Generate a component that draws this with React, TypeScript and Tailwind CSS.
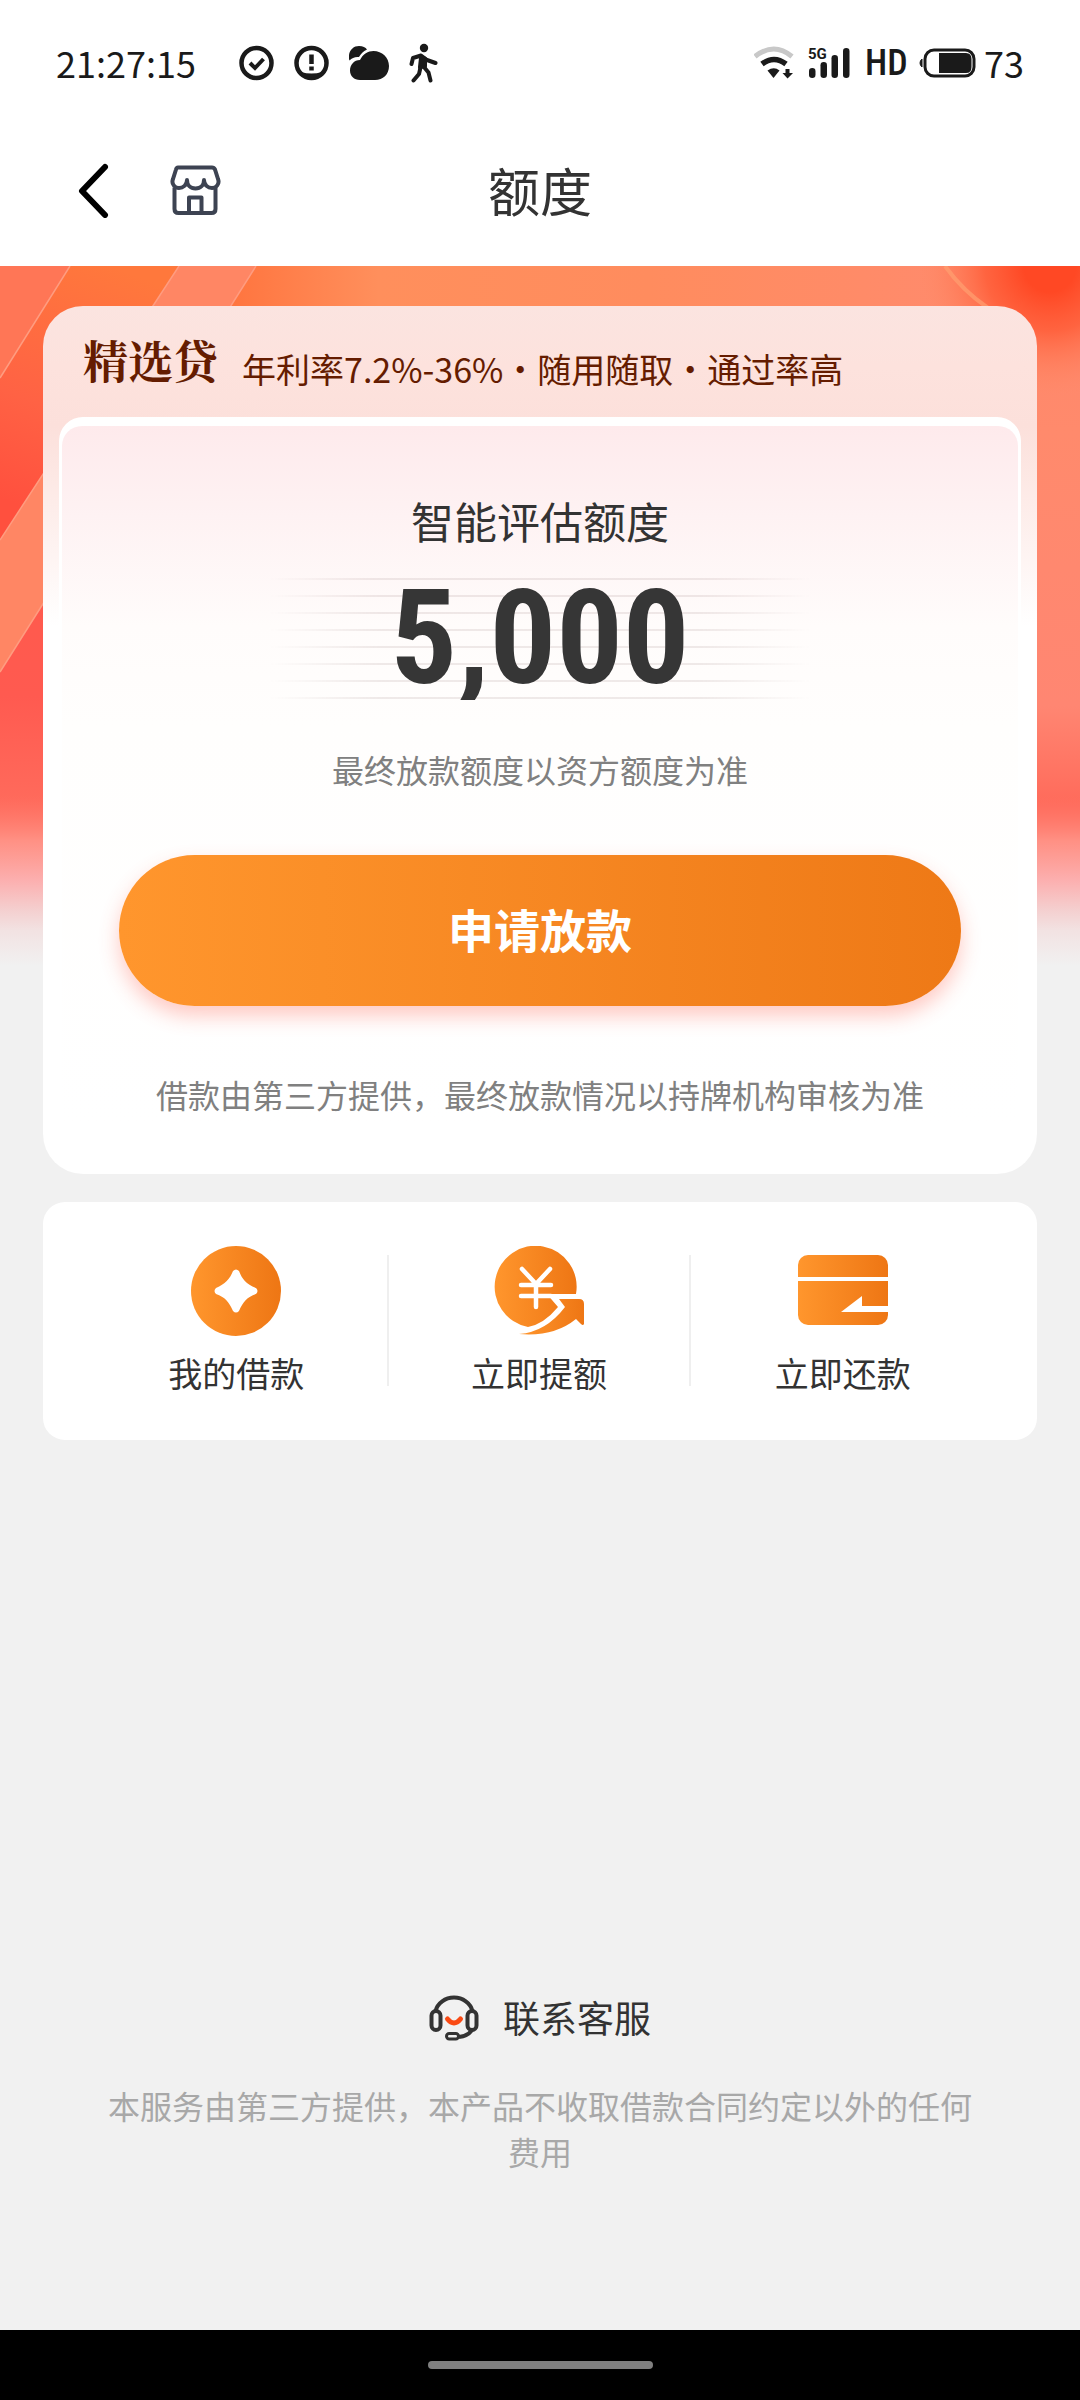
import type { ReactNode } from 'react';

function StatusBar() {
  return (
    <div className="flex h-[118px] items-center justify-between px-[56px] pt-2 text-[36px] leading-none text-[#1a1a1a]">
      <div className="flex items-center">
        <span className="w-[183px] pb-[3px]">21:27:15</span>
        <div className="flex items-center gap-5">
          <svg width="35" height="36" viewBox="0 0 35 36" fill="none" stroke="#1a1a1a">
            <circle cx="17.5" cy="18" r="15" strokeWidth="4.5" />
            <path d="M11 18l5 5 8.500-9" strokeWidth="4" />
          </svg>
          <svg width="35" height="36" viewBox="0 0 35 36" fill="none" stroke="#1a1a1a">
            <circle cx="17.5" cy="18" r="15" strokeWidth="4.5" />
            <path d="M17.500 9.500v9.500M17.500 21.500v4" strokeWidth="4.5" />
            <path d="M7 27q10.500 3 21 0q-4 6-10.500 6T7 27z" fill="#1a1a1a" stroke="none" />
          </svg>
          <svg width="40" height="36" viewBox="0 0 40 36" fill="#1a1a1a">
            <path d="M0 14C-1 6 4 1 10 1c4 0 6.500 1.500 8 3.500C14 6 12 9 10 12c-4-.5-7 1-9.500 3.500z" />
            <path d="M11 35C5 35 1 31 1 25.500S5 15 11 15C14 9 19 6 24.500 6 33 6 40 12.500 40 21s-6 14-14 14z" />
          </svg>
          <svg width="29" height="40" viewBox="0 0 29 40" fill="none" stroke="#1a1a1a" strokeWidth="4" strokeLinecap="round" strokeLinejoin="round">
            <circle cx="15" cy="5" r="4.2" fill="#1a1a1a" stroke="none" />
            <path d="M2.500 21l1.500-6L12 12.500l6 4.500 8.500 3" />
            <path d="M12.500 15L11.500 24M15.500 16v7" strokeWidth="5" />
            <path d="M11.500 24.500L10 31l-5.500 6.500M14.500 23.500l5 6 2 8" />
          </svg>
        </div>
      </div>
      <div className="flex items-center">
        <svg width="97" height="48" viewBox="0 -8 97 48" fill="#1a1a1a">
          <path d="M1 9.500Q20-5.500 38 9.500" fill="none" stroke="#c8c8c8" strokeWidth="5" />
          <path d="M8 17Q20 8 32 17" fill="none" stroke="#1a1a1a" strokeWidth="5.5" />
          <path d="M13.500 23.500q6.500-4.500 12 0L19.500 31z" />
          <path d="M31.500 22h4v4h3.500L33.500 31.500 28.500 26h3z" />
          <text x="54" y="11.5" fontSize="15" fontWeight="700" fontFamily="Roboto, sans-serif">5G</text>
          <rect x="55" y="21" width="6.5" height="10" rx="3.2" />
          <rect x="66.5" y="15" width="6.5" height="16" rx="3.2" />
          <rect x="77.5" y="8" width="6.5" height="23" rx="3.2" />
          <rect x="89" y="1" width="6.5" height="30" rx="3.2" />
        </svg>
        <span className="ml-[14px] w-[54px] font-['Roboto_Condensed','Roboto',sans-serif] text-[36px] font-medium">HD</span>
        <svg width="57" height="30" viewBox="0 0 57 30" fill="none">
          <path d="M3 11a5 5 0 000 8z" fill="#1a1a1a" stroke="#1a1a1a" />
          <rect x="6" y="2" width="49" height="26" rx="9" stroke="#1a1a1a" strokeWidth="3" />
          <path d="M20 5h27q5.500 0 5.500 6v8q0 6-5.500 6H20z" fill="#1a1a1a" />
        </svg>
        <span className="ml-2 pb-[3px]">73</span>
      </div>
    </div>
  );
}

function NavBar() {
  return (
    <header className="grid h-[148px] grid-cols-3 items-center px-[72px] pb-1">
      <div className="flex items-center gap-[55px]">
        <button type="button" aria-label="返回">
          <svg width="42" height="56" viewBox="0 0 42 56" fill="none" stroke="#000" strokeWidth="6" strokeLinecap="round" strokeLinejoin="round">
            <path d="M33 5L10 29l23 24" />
          </svg>
        </button>
        <button type="button" aria-label="首页">
          <svg width="52" height="52" viewBox="0 0 52 52" fill="none" stroke="#3d4352" strokeWidth="4" strokeLinejoin="round">
            <path d="M9 3.500h34q2 0 3 2l3 9.500c2 5-2 9-6 9s-8-3-8-8c0 5-3.500 8.500-8.500 8.500S18 21 18 16c0 5-4 8-8 8s-8-4-6-9l3-9.500q.5-2 2-2z" />
            <path d="M5.500 23.500V45q0 4 4 4h33q4 0 4-4V23.500M20 49V33.500h12.500V49" />
          </svg>
        </button>
      </div>
      <h1 className="text-center text-[52px] leading-none text-[#333]">额度</h1>
    </header>
  );
}

function Backdrop() {
  return (
    <svg className="absolute inset-x-0 top-0 h-[700px] w-full" viewBox="0 0 1080 700" preserveAspectRatio="none" aria-hidden="true">
      <defs>
        <linearGradient id="base" x1="0" x2="1" y1="0" y2="0">
          <stop offset="0.2" stopColor="#ff723c" />
          <stop offset="0.35" stopColor="#ff8f5c" />
          <stop offset="0.6" stopColor="#ff8c5e" />
          <stop offset="1" stopColor="#ff8a72" />
        </linearGradient>
        <linearGradient id="deep" gradientUnits="userSpaceOnUse" x1="110" y1="0" x2="20" y2="240">
          <stop offset="0" stopColor="#ff783c" />
          <stop offset="0.6" stopColor="#ff6244" />
          <stop offset="1" stopColor="#ff503e" />
        </linearGradient>
        <linearGradient id="low" gradientUnits="userSpaceOnUse" x1="0" y1="300" x2="0" y2="560">
          <stop offset="0" stopColor="#ff5a4c" />
          <stop offset="0.5" stopColor="#ff5a50" />
          <stop offset="1" stopColor="#ff6e5e" />
        </linearGradient>
        <linearGradient id="side" gradientUnits="userSpaceOnUse" x1="0" y1="40" x2="0" y2="540">
          <stop offset="0" stopColor="#ff8664" stopOpacity="0" />
          <stop offset="0.25" stopColor="#ff8a6c" />
          <stop offset="0.8" stopColor="#ff8672" />
          <stop offset="1" stopColor="#ff6a5a" />
        </linearGradient>
        <radialGradient id="glow" gradientUnits="userSpaceOnUse" cx="1050" cy="0" r="130">
          <stop offset="0.2" stopColor="#ff4824" />
          <stop offset="0.5" stopColor="#ff5a34" stopOpacity="0.8" />
          <stop offset="1" stopColor="#ff8860" stopOpacity="0" />
        </radialGradient>
        <linearGradient id="fade" gradientUnits="userSpaceOnUse" x1="0" y1="530" x2="0" y2="700">
          <stop offset="0" stopColor="#ff7a6c" stopOpacity="0" />
          <stop offset="0.26" stopColor="#ff9488" stopOpacity="0.9" />
          <stop offset="0.5" stopColor="#fcb0b0" />
          <stop offset="0.67" stopColor="#f4cfcf" />
          <stop offset="0.79" stopColor="#f2e2e2" />
          <stop offset="1" stopColor="#f1f1f1" />
        </linearGradient>
      </defs>
      <rect width="1080" height="700" fill="url(#base)" />
      <rect x="900" width="180" height="700" fill="url(#side)" />
      <path d="M0 0h256L0 406z" fill="#ff8664" />
      <path d="M0 0h179L0 274z" fill="url(#deep)" />
      <path d="M0 0h70L0 112z" fill="#ff7656" />
      <path d="M0 406L60 311V700H0z" fill="url(#low)" />
      <path d="M70 0L0 112M179 0L0 274M256 0L0 406" stroke="#ff9c80" strokeWidth="1.5" />
      <rect x="880" width="200" height="180" fill="url(#glow)" />
      <path d="M945 0Q962 24 988 42" fill="none" stroke="#ffa070" strokeWidth="4" opacity="0.7" />
      <rect width="1080" height="700" fill="url(#fade)" />
    </svg>
  );
}

function CreditCard() {
  return (
    <section className="rounded-[40px] bg-white bg-[linear-gradient(#fbe4e0,#fde2dd_60px,#fce0db_120px,#ffffff_320px)] px-4 pb-[18px]">
      <div className="flex h-[111px] items-center gap-6 pl-6 text-[#651c00]">
        <h2 className="pb-1 font-['Noto_Serif_CJK_SC','Noto_Sans_CJK_SC',serif] text-[45px] leading-none font-bold">精选贷</h2>
        <p className="mt-[14px] text-[34px] leading-none">年利率7.2%-36%・随用随取・通过率高</p>
      </div>
      <div className="rounded-t-[24px] bg-white px-[3px] pt-[9px]">
        <div className="flex flex-col items-center rounded-t-[20px] bg-[linear-gradient(#feeaec,#fef2f3_90px,#fffcfb_200px,#fffefd_300px,#ffffff_700px)] px-[57px] pt-[69px] pb-[38px] text-center">
          <p className="text-[43px] leading-[50px] text-[#333]">智能评估额度</p>
          <div className="mt-[33px] h-[122px] w-[540px] bg-[repeating-linear-gradient(#80606020_0px,#80606020_2px,transparent_2px,transparent_17px)] mask-x-from-80%">
            <p className="pt-[10px] font-['Roboto_Condensed','Roboto',sans-serif] text-[132px] leading-[100px] font-bold text-[#363636]">5,000</p>
          </div>
          <p className="mt-[45px] text-[32px] leading-[48px] text-[#808080]">最终放款额度以资方额度为准</p>
          <button
            type="button"
            className="mt-[62px] h-[151px] w-full rounded-full bg-linear-to-r from-[#ff962d] to-[#ee7916] pb-[5px] text-[46px] font-bold text-white shadow-[0_10px_20px_#ff503c4d]"
          >
            申请放款
          </button>
          <p className="mt-[64px] text-[32px] leading-[48px] text-[#808080]">借款由第三方提供，最终放款情况以持牌机构审核为准</p>
        </div>
      </div>
    </section>
  );
}

const iconFill = (id: string) => (
  <defs>
    <linearGradient id={id}>
      <stop offset="0" stopColor="#ff962d" />
      <stop offset="1" stopColor="#ee7614" />
    </linearGradient>
  </defs>
);

const actions: { label: string; icon: ReactNode }[] = [
  {
    label: '我的借款',
    icon: (
      <svg width="90" height="90" viewBox="0 0 90 90">
        {iconFill('loan')}
        <circle cx="45" cy="45" r="45" fill="url(#loan)" />
        <path
          d="M42 25q3-3 6 0c3 8 7 13 17 17q3 3 0 6c-9 3-13 8-17 17q-3 3-6 0c-4-9-8-14-17-17q-3-3 0-6c9-4 14-9 17-17z"
          fill="#fff"
        />
      </svg>
    ),
  },
  {
    label: '立即提额',
    icon: (
      <svg width="90" height="90" viewBox="0 0 90 90">
        {iconFill('raise')}
        <path d="M82 48A41 41 0 1034 81Q50 78 64 61L58 54 53 48z" fill="url(#raise)" />
        <path d="M28 23l14 15 14-15M27 39h30M27 50h30M42 39v22" fill="none" stroke="#fff" strokeWidth="4.5" strokeLinecap="round" />
        <path d="M65 53h20q5 0 5 5v20q-1 2-3 0l-5-5Q60 91 25 88 52 86 71 61z" fill="url(#raise)" />
      </svg>
    ),
  },
  {
    label: '立即还款',
    icon: (
      <svg width="90" height="90" viewBox="0 0 90 90">
        {iconFill('repay')}
        <rect y="9" width="90" height="70" rx="10" fill="url(#repay)" />
        <path d="M0 31h90v4H0zM43 66L64 50v10h26v6z" fill="#fff" />
      </svg>
    ),
  },
];

function Actions() {
  return (
    <section className="mt-7 grid grid-cols-3 divide-x-2 divide-[#efefef] rounded-[22px] bg-white px-[43px] pt-[53px] pb-[54px]">
      {actions.map((action) => (
        <button key={action.label} type="button" className="flex h-[131px] flex-col items-center">
          <span className="-mt-[9px]">{action.icon}</span>
          <span className="mt-3 text-[34px] leading-[50px] text-[#333]">{action.label}</span>
        </button>
      ))}
    </section>
  );
}

function Footer() {
  return (
    <footer className="mt-auto flex flex-col items-center px-[60px] pb-[156px] text-center">
      <a href="#service" className="flex items-center gap-6 text-[37px] leading-[54px] text-[#333]">
        <svg width="50" height="48" viewBox="0 0 50 48" fill="none" stroke="#333" strokeWidth="4">
          <path d="M6.500 18a19 17.500 0 0137 0" />
          <rect x="2.5" y="18" width="9" height="19" rx="4.5" />
          <rect x="38.5" y="18" width="9" height="19" rx="4.5" />
          <path d="M43 37q-4 6-13 7" />
          <rect x="17.5" y="40.5" width="12" height="5.5" rx="2.7" strokeWidth="3" />
          <path d="M18.500 26q6.500 8 13 0" stroke="#fa4a14" strokeWidth="5" strokeLinecap="round" />
        </svg>
        联系客服
      </a>
      <p className="mt-[38px] text-[32px] leading-[46px] text-[#a8a8a8]">本服务由第三方提供，本产品不收取借款合同约定以外的任何费用</p>
    </footer>
  );
}

export default function App() {
  return (
    <div className="flex min-h-screen flex-col bg-white font-['Noto_Sans_CJK_SC',sans-serif]" lang="zh-CN">
      <StatusBar />
      <NavBar />
      <main className="relative flex grow flex-col bg-[#f1f1f1]">
        <Backdrop />
        <div className="relative flex grow flex-col px-[43px] pt-10">
          <CreditCard />
          <Actions />
          <Footer />
        </div>
      </main>
      <div className="flex h-[70px] items-center justify-center bg-black">
        <div className="h-2 w-[225px] rounded-full bg-[#808080]" />
      </div>
    </div>
  );
}
